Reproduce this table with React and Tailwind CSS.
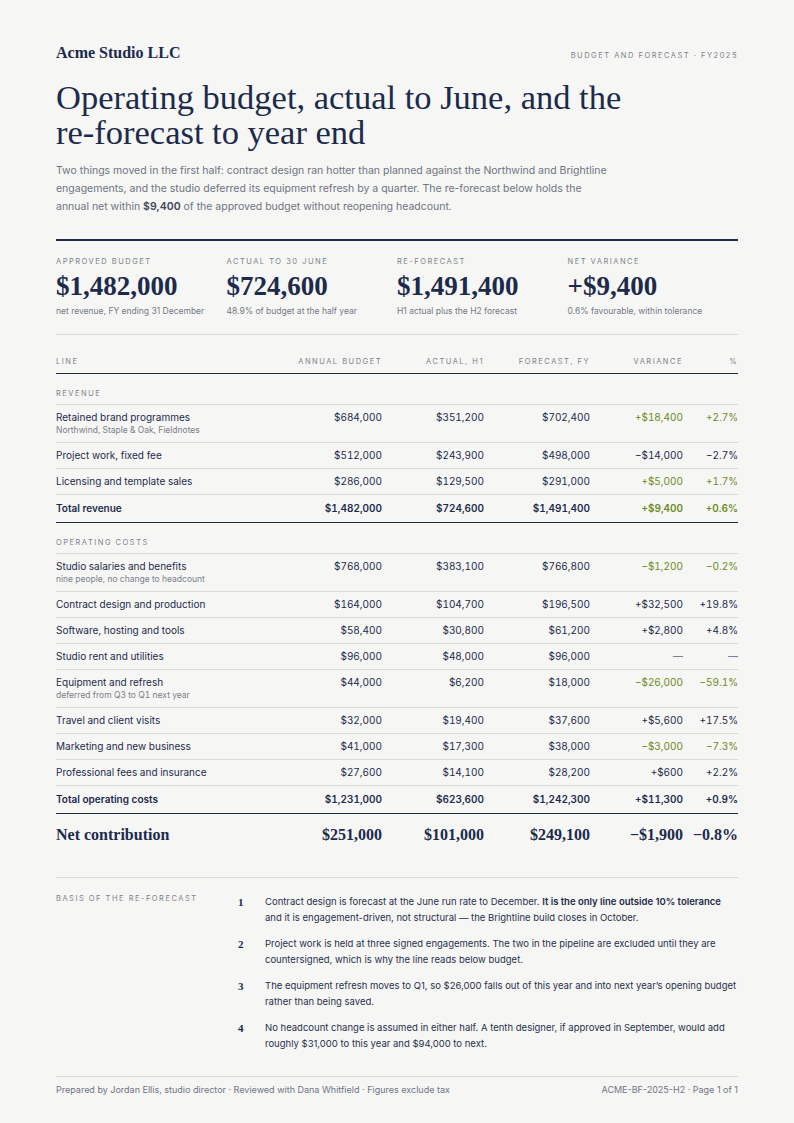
import React from "react";

const NAVY = "text-[#1c2a4c]";
const GREEN = "text-[#6a8a22]";

const serif = "font-['Liberation_Serif',serif]";

function Label({ children, className = "" }) {
  return (
    <div className={`text-[7.5px] leading-[10px] tracking-[0.2em] uppercase text-[#7d828c] ${className}`}>
      {children}
    </div>
  );
}

const cols = "grid grid-cols-[1fr_100px_102px_106px_93px_55px]";

const revenue = [
  { name: "Retained brand programmes", sub: "Northwind, Staple & Oak, Fieldnotes", b: "$684,000", a: "$351,200", f: "$702,400", v: "+$18,400", p: "+2.7%", good: true },
  { name: "Project work, fixed fee", b: "$512,000", a: "$243,900", f: "$498,000", v: "\u2212$14,000", p: "\u22122.7%" },
  { name: "Licensing and template sales", b: "$286,000", a: "$129,500", f: "$291,000", v: "+$5,000", p: "+1.7%", good: true },
];

const costs = [
  { name: "Studio salaries and benefits", sub: "nine people, no change to headcount", b: "$768,000", a: "$383,100", f: "$766,800", v: "\u2212$1,200", p: "\u22120.2%", good: true },
  { name: "Contract design and production", b: "$164,000", a: "$104,700", f: "$196,500", v: "+$32,500", p: "+19.8%" },
  { name: "Software, hosting and tools", b: "$58,400", a: "$30,800", f: "$61,200", v: "+$2,800", p: "+4.8%" },
  { name: "Studio rent and utilities", b: "$96,000", a: "$48,000", f: "$96,000", v: "\u2014", p: "\u2014", dash: true },
  { name: "Equipment and refresh", sub: "deferred from Q3 to Q1 next year", b: "$44,000", a: "$6,200", f: "$18,000", v: "\u2212$26,000", p: "\u221259.1%", good: true },
  { name: "Travel and client visits", b: "$32,000", a: "$19,400", f: "$37,600", v: "+$5,600", p: "+17.5%" },
  { name: "Marketing and new business", b: "$41,000", a: "$17,300", f: "$38,000", v: "\u2212$3,000", p: "\u22127.3%", good: true },
  { name: "Professional fees and insurance", b: "$27,600", a: "$14,100", f: "$28,200", v: "+$600", p: "+2.2%" },
];

function Row({ r }) {
  const vc = r.good ? GREEN : r.dash ? "text-[#5b6788]" : NAVY;
  return (
    <div className={`${cols} border-b border-[#dcdcd5] pt-[6px] pb-[6px] text-[10px] leading-[13px] tabular-nums`}>
      <div className={NAVY}>
        <div>{r.name}</div>
        {r.sub && <div className="text-[8.5px] leading-[12px] text-[#7a808b]">{r.sub}</div>}
      </div>
      <div className={`text-right ${NAVY}`}>{r.b}</div>
      <div className={`text-right ${NAVY}`}>{r.a}</div>
      <div className={`text-right ${NAVY}`}>{r.f}</div>
      <div className={`text-right ${vc}`}>{r.v}</div>
      <div className={`text-right ${vc}`}>{r.p}</div>
    </div>
  );
}

function TotalRow({ name, b, a, f, v, p, good }) {
  const vc = good ? GREEN : NAVY;
  return (
    <div className={`${cols} border-b border-[#1c2a4c] pt-[7px] pb-[7px] text-[10px] leading-[13px] font-semibold tabular-nums`}>
      <div className={NAVY}>{name}</div>
      <div className={`text-right ${NAVY}`}>{b}</div>
      <div className={`text-right ${NAVY}`}>{a}</div>
      <div className={`text-right ${NAVY}`}>{f}</div>
      <div className={`text-right ${vc}`}>{v}</div>
      <div className={`text-right ${vc}`}>{p}</div>
    </div>
  );
}

function SectionHead({ children }) {
  return (
    <div className="border-b border-[#dcdcd5] pt-[15px] pb-[5px]">
      <Label>{children}</Label>
    </div>
  );
}

const notes = [
  <>
    Contract design is forecast at the June run rate to December.{" "}
    <span className="font-semibold text-[#1c2a4c]">It is the only line outside 10% tolerance</span> and it is
    engagement-driven, not structural — the Brightline build closes in October.
  </>,
  <>
    Project work is held at three signed engagements. The two in the pipeline are excluded until they are
    countersigned, which is why the line reads below budget.
  </>,
  <>
    The equipment refresh moves to Q1, so $26,000 falls out of this year and into next year’s opening budget
    rather than being saved.
  </>,
  <>
    No headcount change is assumed in either half. A tenth designer, if approved in September, would add
    roughly $31,000 to this year and $94,000 to next.
  </>,
];

export default function App() {
  return (
    <div className="min-h-[1123px] w-[794px] bg-[#f6f6f4] font-['Inter',sans-serif] px-[56px] pt-[44px] pb-[24px]">
      {/* header */}
      <div className="flex items-baseline justify-between">
        <div className={`${serif} text-[16px] leading-[18px] font-bold ${NAVY}`}>Acme Studio LLC</div>
        <div className="text-[7.5px] tracking-[0.2em] text-[#7d828c]">BUDGET AND FORECAST · FY2025</div>
      </div>

      <h1 className={`${serif} mt-[18px] text-[34.5px] leading-[35px] font-normal ${NAVY}`}>
        Operating budget, actual to June, and the
        <br />
        re-forecast to year end
      </h1>

      <p className="mt-[12px] max-w-[560px] text-[10.5px] leading-[18px] text-[#6e7482]">
        Two things moved in the first half: contract design ran hotter than planned against the Northwind and Brightline
        engagements, and the studio deferred its equipment refresh by a quarter. The re-forecast below holds the
        annual net within <span className="font-semibold text-[#3d4659]">$9,400</span> of the approved budget without
        reopening headcount.
      </p>

      {/* KPIs */}
      <div className="mt-[23px] border-t-2 border-[#1c2a4c] border-b border-b-[#dcdcd5] grid grid-cols-4 pt-[16px] pb-[17px]">
        {[
          ["Approved budget", "$1,482,000", "net revenue, FY ending 31 December"],
          ["Actual to 30 June", "$724,600", "48.9% of budget at the half year"],
          ["Re-forecast", "$1,491,400", "H1 actual plus the H2 forecast"],
          ["Net variance", "+$9,400", "0.6% favourable, within tolerance"],
        ].map(([l, v, s]) => (
          <div key={l}>
            <Label>{l}</Label>
            <div className={`${serif} mt-[5px] text-[27px] leading-[28px] font-bold ${NAVY}`}>{v}</div>
            <div className="mt-[5px] text-[8.5px] leading-[12px] text-[#737987]">{s}</div>
          </div>
        ))}
      </div>

      {/* table */}
      <div className="mt-[22px]">
        <div className={`${cols} border-b border-[#1c2a4c] pb-[6px]`}>
          <Label>Line</Label>
          <Label className="text-right">Annual budget</Label>
          <Label className="text-right">Actual, H1</Label>
          <Label className="text-right">Forecast, FY</Label>
          <Label className="text-right">Variance</Label>
          <Label className="text-right">%</Label>
        </div>
        <SectionHead>Revenue</SectionHead>
        {revenue.map((r) => (
          <Row key={r.name} r={r} />
        ))}
        <TotalRow name="Total revenue" b="$1,482,000" a="$724,600" f="$1,491,400" v="+$9,400" p="+0.6%" good />
        <SectionHead>Operating costs</SectionHead>
        {costs.map((r) => (
          <Row key={r.name} r={r} />
        ))}
        <TotalRow name="Total operating costs" b="$1,231,000" a="$623,600" f="$1,242,300" v="+$11,300" p="+0.9%" />
        <div className={`${cols} ${serif} pt-[11px] pb-[10px] text-[16px] leading-[20px] font-bold ${NAVY}`}>
          <div>Net contribution</div>
          <div className="text-right">$251,000</div>
          <div className="text-right">$101,000</div>
          <div className="text-right">$249,100</div>
          <div className="text-right">−$1,900</div>
          <div className="text-right">−0.8%</div>
        </div>
      </div>

      {/* notes */}
      <div className="mt-[22px] border-t border-[#dcdcd5] pt-[16px] grid grid-cols-[182px_1fr]">
        <Label className="pt-[0px]">Basis of the re-forecast</Label>
        <div className="flex flex-col gap-[10px]">
          {notes.map((n, i) => (
            <div key={i} className="grid grid-cols-[27px_1fr]">
              <div className={`${serif} text-[11px] leading-[16px] font-bold ${NAVY}`}>{i + 1}</div>
              <div className="text-[9.5px] leading-[16px] text-[#27314d]">{n}</div>
            </div>
          ))}
        </div>
      </div>

      {/* footer */}
      <div className="mt-[24px] border-t border-[#dcdcd5] pt-[7px] flex justify-between text-[9px] leading-[12px] text-[#6f7584]">
        <div>Prepared by Jordan Ellis, studio director · Reviewed with Dana Whitfield · Figures exclude tax</div>
        <div>ACME-BF-2025-H2 · Page 1 of 1</div>
      </div>
    </div>
  );
}
